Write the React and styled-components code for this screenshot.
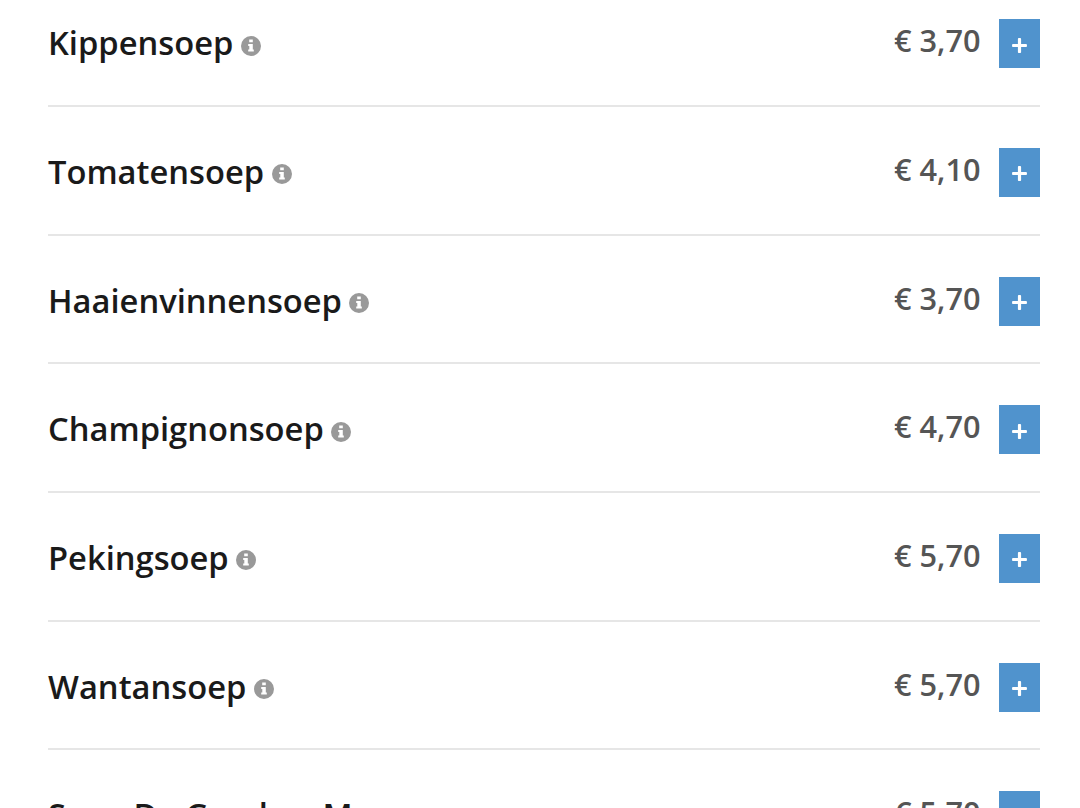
import React from "react";
import styled, { createGlobalStyle } from "styled-components";
import { FaPlus } from "react-icons/fa";

const dishes = [
  { name: "Kippensoep", price: "€ 3,70" },
  { name: "Tomatensoep", price: "€ 4,10" },
  { name: "Haaienvinnensoep", price: "€ 3,70" },
  { name: "Champignonsoep", price: "€ 4,70" },
  { name: "Pekingsoep", price: "€ 5,70" },
  { name: "Wantansoep", price: "€ 5,70" },
  { name: "Soep De Gambas Mousse", price: "€ 5,70" },
];

const InfoIcon = () => (
  <InfoSvg viewBox="0 0 20 20" aria-hidden="true">
    <path
      fillRule="evenodd"
      d="M10 0a10 10 0 1 1 0 20a10 10 0 0 1 0-20zM8.2 3.4v2.8h3.6V3.4zM7.2 7.9v2h1.1v3.6H7.2v2.1h5.6v-2.1h-1V7.9z"
    />
  </InfoSvg>
);

const App = () => {
  return (
    <Page>
      <GlobalStyle />
      <List>
        {dishes.map((dish) => (
          <Row key={dish.name}>
            <Name>
              {dish.name}
              <InfoIcon />
            </Name>
            <Price>{dish.price}</Price>
            <AddButton aria-label="Toevoegen">
              <PlusIcon />
            </AddButton>
          </Row>
        ))}
      </List>
    </Page>
  );
};

export default App;

const GlobalStyle = createGlobalStyle`
  html, body {
    margin: 0;
    padding: 0;
    background: #fff;
    overflow: hidden;
  }
`;

const Page = styled.div`
  height: 808px;
  overflow: hidden;
  padding: 0 40px 0 48px;
  font-family: "Open Sans", sans-serif;
`;

const List = styled.ul`
  list-style: none;
  margin: -21.6px 0 0;
  padding: 0;
`;

const Row = styled.li`
  box-sizing: border-box;
  height: 128.67px;
  display: flex;
  align-items: center;
  border-bottom: 2px solid #e6e6e6;
`;

const Name = styled.h3`
  flex: 1;
  margin: 2px 0 0;
  display: flex;
  align-items: center;
  font-size: 32.7px;
  font-weight: 600;
  color: #1a1a1a;
`;

const InfoSvg = styled.svg`
  width: 20px;
  height: 20px;
  margin: 6px 0 0 7.5px;
  fill: #999;
`;

const Price = styled.span`
  margin: 0 18px 3px 0;
  font-size: 30.7px;
  font-weight: 600;
  color: #555;
`;

const AddButton = styled.button`
  width: 41.5px;
  height: 49px;
  margin-top: 4px;
  padding: 3px 0 0;
  border: 0;
  display: flex;
  align-items: center;
  justify-content: center;
  background: #5093cd;
  color: #fff;
`;

const PlusIcon = styled(FaPlus)`
  width: 17px;
  height: 17px;
`;
